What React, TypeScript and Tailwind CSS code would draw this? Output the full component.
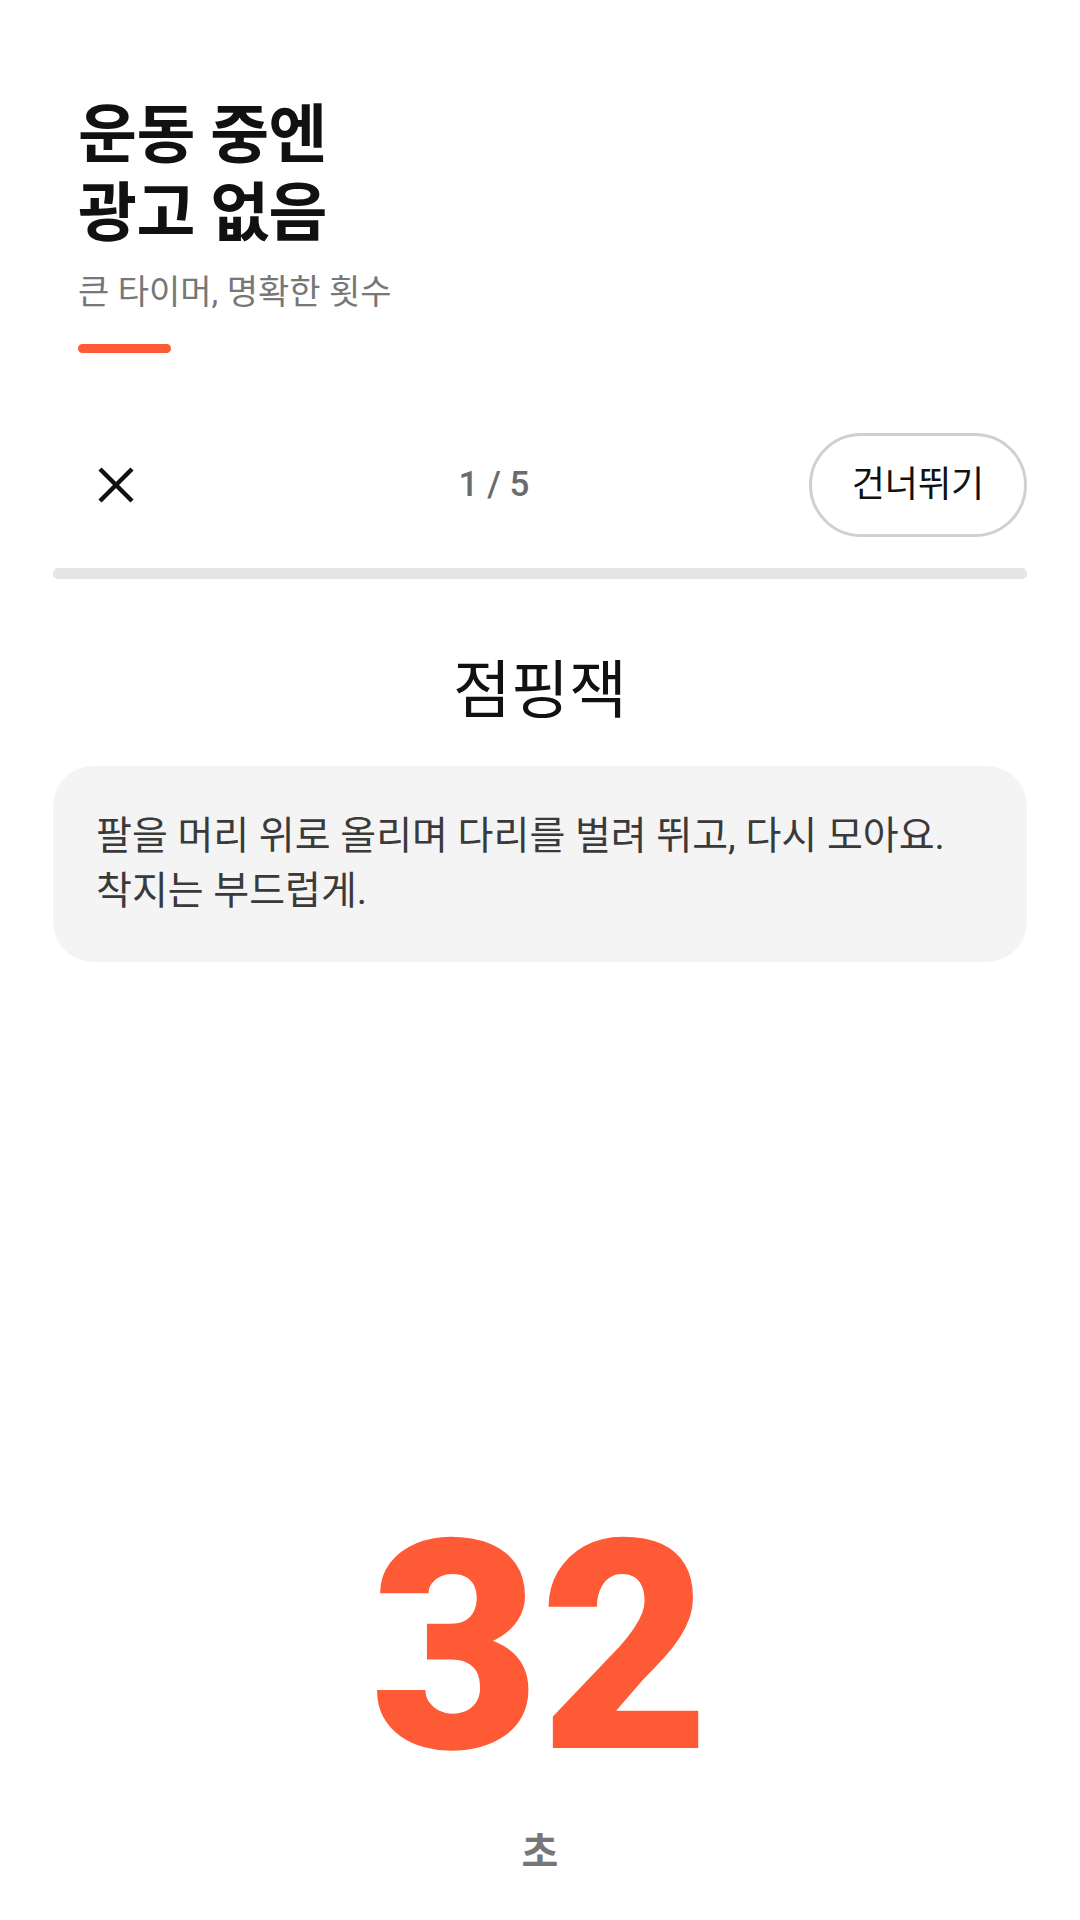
import { useState } from 'react';

type Exercise = {
  name: string;
  description: string;
  seconds: number;
};

const exercises: Exercise[] = [
  {
    name: '점핑잭',
    description: '팔을 머리 위로 올리며 다리를 벌려 뛰고, 다시 모아요. 착지는 부드럽게.',
    seconds: 32,
  },
];

function CloseIcon() {
  return (
    <svg width="38" height="38" viewBox="0 0 38 38" fill="none" aria-hidden="true">
      <path d="M3 3L35 35M35 3L3 35" stroke="#111111" strokeWidth="4.5" />
    </svg>
  );
}

export default function App() {
  const [index] = useState(0);
  const total = 5;
  const current = exercises[index];

  return (
    <div className="flex min-h-[1920px] flex-col bg-white font-['Roboto','Noto_Sans_CJK_KR',sans-serif] text-[#111111]">
      <header className="px-[78px] pt-[97px]">
        <h1 className="text-[64px] font-bold leading-[78px] tracking-[-0.5px] text-[#111111]">
          운동 중엔
          <br />
          광고 없음
        </h1>
        <p className="mt-[17px] text-[34px] leading-[44px] text-[#777777]">큰 타이머, 명확한 횟수</p>
        <div className="mt-[30px] h-[9px] w-[93px] rounded-full bg-[#ff5a36]" />
      </header>

      <main className="flex flex-1 flex-col px-[53px] pt-[80px]">
        <div className="flex h-[104px] items-center">
          <button type="button" className="flex w-[126px] items-center justify-center" aria-label="닫기">
            <CloseIcon />
          </button>
          <div className="flex-1 text-center text-[35px] font-medium text-[#6b6b6b] tabular-nums">
            {index + 1} / {total}
          </div>
          <button
            type="button"
            className="h-[104px] w-[218px] rounded-full border-[3px] border-[#d0d0d0] bg-white text-[36px] text-[#111111]"
          >
            건너뛰기
          </button>
        </div>

        <div className="mt-[31px] h-[11px] overflow-hidden rounded-full bg-[#e5e5e5]">
          <div className="h-full bg-[#ff5a36]" style={{ width: `${(index / total) * 100}%` }} />
        </div>

        <h2 className="mt-[77px] text-center text-[63px] font-normal leading-[70px] text-[#111111]">
          {current.name}
        </h2>

        <div className="mt-[40px] break-keep rounded-[40px] bg-[#f4f4f4] px-[43px] py-[43px] text-[39px] leading-[55px] text-[#3a3a3a]">
          {current.description}
        </div>

        <div className="flex flex-1 flex-col items-center justify-end pb-[37px]">
          <div className="text-[293px] font-black leading-none text-[#ff5a36] tabular-nums">
            {current.seconds}
          </div>
          <div className="mt-[28px] text-[40px] font-bold leading-[60px] text-[#777777]">초</div>
        </div>
      </main>
    </div>
  );
}
